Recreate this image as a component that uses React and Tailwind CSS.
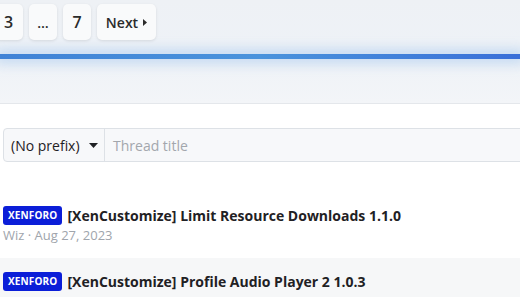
import React from 'react';

const font = { fontFamily: '"Open Sans", "Liberation Sans", sans-serif' };

const PageButton = ({ children, className = '' }) => (
  <div
    className={`h-[36px] flex items-center justify-center rounded-[5px] bg-[#f9fafb] shadow-[0_1px_3px_rgba(0,0,0,0.10)] font-semibold text-[#2b2b2b] ${className}`}
  >
    {children}
  </div>
);

const Thread = ({ title, meta, alt }) => (
  <div className={`px-[3px] pt-[14px] pb-[12px] ${alt ? 'bg-[#f6f7f8]' : 'bg-white'}`}>
    <div className="flex items-center gap-[5px] h-[20px]">
      <span className="h-[19px] px-[5px] flex items-center rounded-[3px] bg-[#0b1ed8] text-white text-[10px] font-bold tracking-[0.15px]">
        XENFORO
      </span>
      <span className="text-[14px] font-bold text-[#1f2124] whitespace-nowrap">{title}</span>
    </div>
    <div className="mt-[1px] text-[13px] text-[#a0a5ac] whitespace-nowrap">{meta}</div>
  </div>
);

export default function App() {
  return (
    <div className="w-[520px] h-[297px] overflow-hidden bg-white" style={font}>
      <div className="h-[104px] border-b border-[#e4e7eb] bg-gradient-to-b from-[#eef1f5] via-[#eef2f7] to-[#f3f5f8]">
        <div className="flex gap-[6px] pt-[4px] ml-[-6px]">
          <PageButton className="w-[29px] text-[16px]">3</PageButton>
          <PageButton className="w-[28px] text-[14px]">…</PageButton>
          <PageButton className="w-[28px] text-[16px]">7</PageButton>
          <PageButton className="w-[59px] gap-[5px] text-[14px] font-medium">
            Next
            <svg width="4" height="7" viewBox="0 0 4 7"><path d="M0 0 L4 3.5 L0 7 Z" fill="#2b2b2b" /></svg>
          </PageButton>
        </div>
        <div className="mt-[14px] h-[5px] bg-gradient-to-r from-[#3f82d6] via-[#4a93dc] to-[#3a6fd8] shadow-[0_0_12px_5px_rgba(140,185,235,0.4)]" />
      </div>

      <div className="px-[3px] pt-[24px]">
        <div className="flex h-[34px] border border-[#dde1e6] rounded-l-[4px] bg-[#f7f8fa] mr-[-10px]">
          <div className="w-[101px] flex items-center pl-[7px] gap-[9px] border-r border-[#dde1e6] text-[14px] text-[#1f2124]">
            (No prefix)
            <svg width="9" height="5" viewBox="0 0 9 5"><path d="M0 0 L9 0 L4.5 5 Z" fill="#1f2124" /></svg>
          </div>
          <div className="flex items-center pl-[8px] text-[14px] text-[#a3a7ad]">Thread title</div>
        </div>
      </div>

      <div className="mt-[29px]">
        <Thread title="[XenCustomize] Limit Resource Downloads 1.1.0" meta="Wiz · Aug 27, 2023" />
        <Thread title="[XenCustomize] Profile Audio Player 2 1.0.3" meta="Wiz · Friday at 10:06 PM" alt />
      </div>
    </div>
  );
}
